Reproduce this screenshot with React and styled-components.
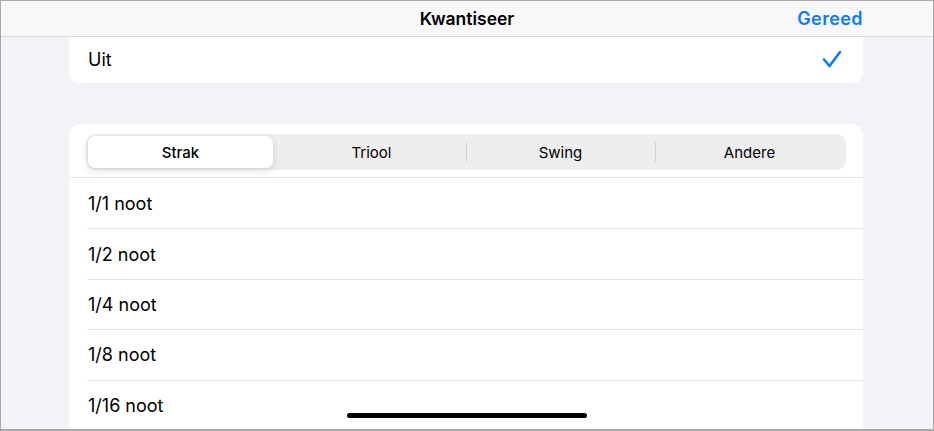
import styled, { createGlobalStyle } from "styled-components"

const Blue = "#0a7aff"

const GlobalStyle = createGlobalStyle`
  html, body {
    margin: 0;
    padding: 0;
    background: #ffffff;
  }
  body {
    font-family: Inter, "Noto Sans", "Liberation Sans", sans-serif;
    -webkit-font-smoothing: antialiased;
  }
`

const Screen = styled.div`
  position: relative;
  width: 934px;
  height: 431px;
  box-sizing: border-box;
  border: 1px solid #a9a9ab;
  border-bottom-width: 2px;
  background: #f2f2f7;
  overflow: hidden;
  display: flex;
  flex-direction: column;
`

const NavBar = styled.div`
  flex: none;
  height: 35px;
  display: grid;
  grid-template-columns: 1fr auto 1fr;
  align-items: center;
  padding: 0 70px;
  background: #f8f8f9;
  border-bottom: 1px solid #dcdcdf;
`

const NavTitle = styled.div`
  grid-column: 2;
  font-size: 17.5px;
  font-weight: 560;
  color: #000;
`

const NavAction = styled.button`
  grid-column: 3;
  justify-self: end;
  border: 0;
  padding: 0;
  background: none;
  font-family: inherit;
  font-size: 18px;
  font-weight: 580;
  letter-spacing: 0.4px;
  color: ${Blue};
`

const Content = styled.div`
  flex: 1;
  display: flex;
  flex-direction: column;
  gap: 41px;
  padding: 0 70px 0 68px;
`

const Card = styled.div`
  flex: ${(p) => (p.$clipTop ? "none" : "1")};
  background: #ffffff;
  border-radius: ${(p) => (p.$clipTop ? "0 0 11px 11px" : "11px 11px 0 0")};
  display: flex;
  flex-direction: column;
`

const OptionRow = styled.div`
  height: 46px;
  box-sizing: border-box;
  display: flex;
  align-items: center;
  justify-content: space-between;
  padding: 0 21px 2px 19px;
  font-size: 18px;
  color: #000;
`

const SegmentWrap = styled.div`
  padding: 10px 17px 7px 17px;
  border-bottom: 1px solid #e4e4e8;
`

const Segmented = styled.div`
  height: 36px;
  box-sizing: border-box;
  padding: 2px;
  border-radius: 9px;
  background: #eeeeef;
  display: grid;
  grid-template-columns: repeat(4, 1fr);
  align-items: stretch;
`

const Segment = styled.div`
  position: relative;
  display: flex;
  align-items: center;
  justify-content: center;
  margin-right: ${(p) => (p.$active ? "4px" : "0")};
  font-size: 15px;
  font-weight: ${(p) => (p.$active ? 540 : 400)};
  color: #000;
  border-radius: 7px;
  background: ${(p) => (p.$active ? "#ffffff" : "transparent")};
  box-shadow: ${(p) =>
    p.$active ? "0 3px 8px rgba(0,0,0,0.12), 0 0 1px rgba(0,0,0,0.1)" : "none"};
  &::before {
    content: "";
    display: ${(p) => (p.$divider ? "block" : "none")};
    position: absolute;
    left: 0;
    top: 6px;
    bottom: 6px;
    width: 1px;
    background: #d4d4d8;
  }
`

const NoteList = styled.div`
  display: flex;
  flex-direction: column;
  padding: 1px 0 0 18px;
`

const NoteRow = styled.div`
  height: 50.4px;
  flex: none;
  box-sizing: border-box;
  display: flex;
  align-items: center;
  padding-left: 1px;
  font-size: 18px;
  color: #000;
  border-bottom: 1px solid #e4e4e8;
`

const HomeIndicator = styled.div`
  position: absolute;
  left: 346px;
  bottom: 11px;
  width: 240px;
  height: 5px;
  border-radius: 3px;
  background: #000;
`

const segments = ["Strak", "Triool", "Swing", "Andere"]
const notes = ["1/1 noot", "1/2 noot", "1/4 noot", "1/8 noot", "1/16 noot"]

function Checkmark() {
  return (
    <svg width="20" height="18" viewBox="0 0 20 18" fill="none">
      <path
        d="M2 9.5 L7.5 16 L18 2"
        stroke={Blue}
        strokeWidth="2.6"
        strokeLinecap="round"
        strokeLinejoin="round"
      />
    </svg>
  )
}

export default function App() {
  const active = 0
  return (
    <>
      <GlobalStyle />
      <Screen>
        <NavBar>
          <NavTitle>Kwantiseer</NavTitle>
          <NavAction>Gereed</NavAction>
        </NavBar>
        <Content>
          <Card $clipTop>
            <OptionRow>
              <span>Uit</span>
              <Checkmark />
            </OptionRow>
          </Card>
          <Card>
            <SegmentWrap>
              <Segmented>
                {segments.map((s, i) => (
                  <Segment
                    key={s}
                    $active={i === active}
                    $divider={i > 0 && i !== active && i - 1 !== active}
                  >
                    {s}
                  </Segment>
                ))}
              </Segmented>
            </SegmentWrap>
            <NoteList>
              {notes.map((n) => (
                <NoteRow key={n}>{n}</NoteRow>
              ))}
            </NoteList>
          </Card>
        </Content>
        <HomeIndicator />
      </Screen>
    </>
  )
}
